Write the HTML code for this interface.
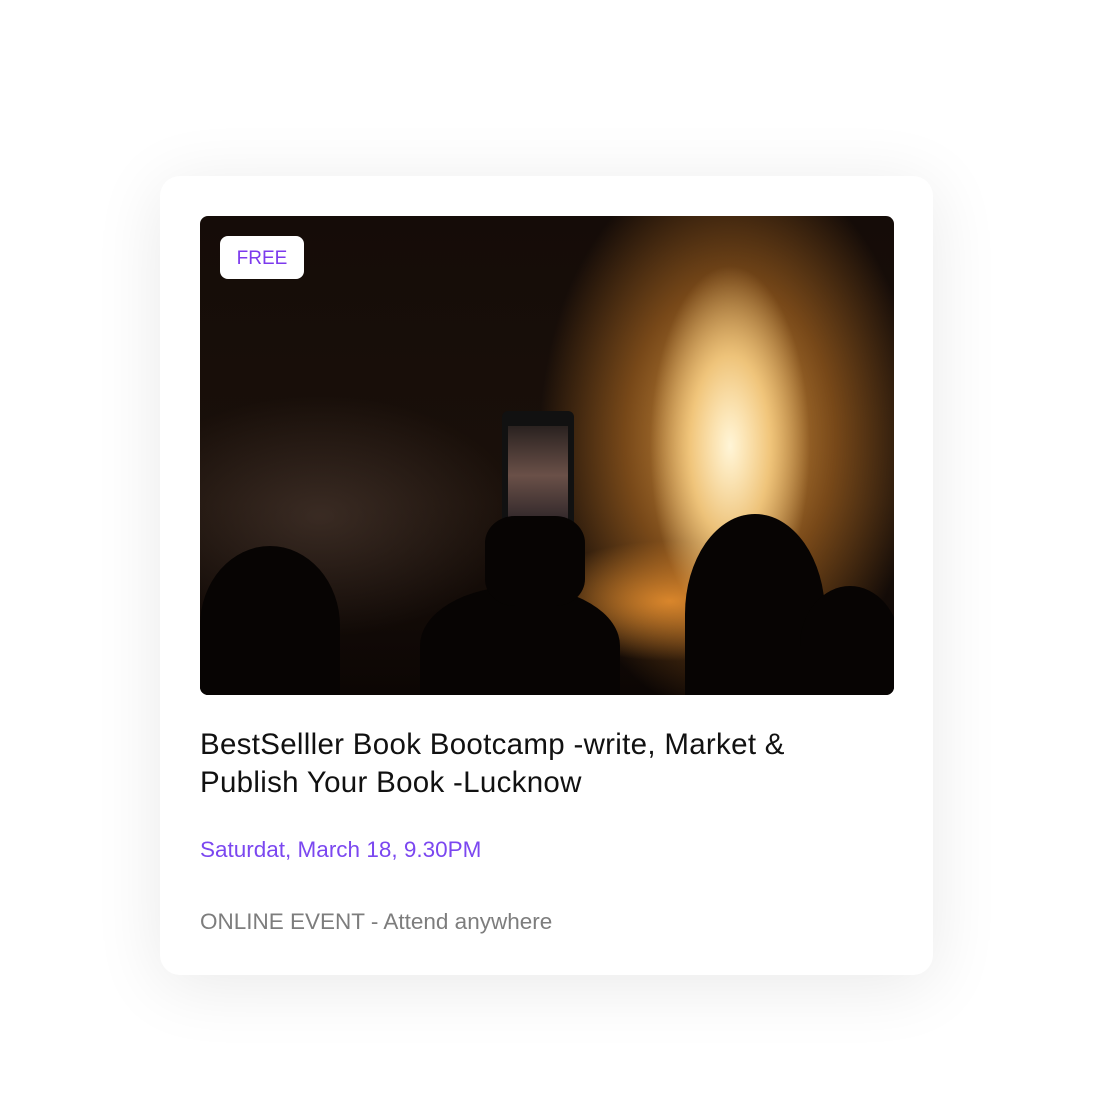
<!DOCTYPE html>
<html><head><style>
html,body{margin:0;padding:0;background:#fff;width:1094px;height:1120px;overflow:hidden;font-family:"Liberation Sans",sans-serif}
.card{position:absolute;left:160px;top:176px;width:773px;height:799px;background:#fff;border-radius:20px;box-shadow:0 10px 70px rgba(0,0,0,0.09)}
.img{position:absolute;left:40px;top:40px;width:694px;height:479px;border-radius:8px;overflow:hidden;
background:
radial-gradient(ellipse 80px 180px at 530px 230px, rgba(255,245,215,1), rgba(255,215,140,0.8) 50%, rgba(255,170,70,0) 100%),
radial-gradient(ellipse 190px 280px at 530px 220px, rgba(245,175,80,0.9), rgba(215,130,40,0.5) 55%, rgba(0,0,0,0) 100%),
radial-gradient(ellipse 140px 60px at 470px 385px, rgba(240,150,50,0.9), rgba(0,0,0,0) 100%),
radial-gradient(ellipse 200px 120px at 120px 300px, rgba(90,70,60,0.5), rgba(0,0,0,0) 100%),
linear-gradient(#150c08,#1a100a 60%,#0c0604)}
.s{position:absolute;background:#070403;border-radius:50% 50% 0 0}
.badge{position:absolute;left:20px;top:20px;width:84px;height:43px;background:#fff;border-radius:8px;color:#7c3aed;font-size:19px;line-height:45px;text-align:center}
.t{position:absolute;left:40px;top:550px;width:640px;font-size:29.5px;line-height:38px;color:#111;letter-spacing:0.3px}
.d{position:absolute;left:40px;top:661px;font-size:22.5px;color:#7b47f0}
.o{position:absolute;left:40px;top:733px;font-size:22.5px;color:#7d7d7d}
</style></head><body>
<div class="card">
<div class="img">
<div style="position:absolute;left:302px;top:195px;width:72px;height:150px;background:#111;border-radius:6px"></div>
<div style="position:absolute;left:308px;top:210px;width:60px;height:110px;background:linear-gradient(#2a2220,#6a5048 45%,#1e1a20)"></div>
<div class="s" style="left:0;top:330px;width:140px;height:160px"></div>
<div class="s" style="left:220px;top:370px;width:200px;height:120px"></div>
<div class="s" style="left:285px;top:300px;width:100px;height:90px;border-radius:30%"></div>
<div class="s" style="left:485px;top:298px;width:140px;height:200px"></div>
<div class="s" style="left:600px;top:370px;width:100px;height:120px"></div>
<div class="badge">FREE</div>
</div>
<div class="t">BestSelller Book Bootcamp -write, Market &amp; Publish Your Book -Lucknow</div>
<div class="d">Saturdat, March 18, 9.30PM</div>
<div class="o">ONLINE EVENT - Attend anywhere</div>
</div>
</body></html>
